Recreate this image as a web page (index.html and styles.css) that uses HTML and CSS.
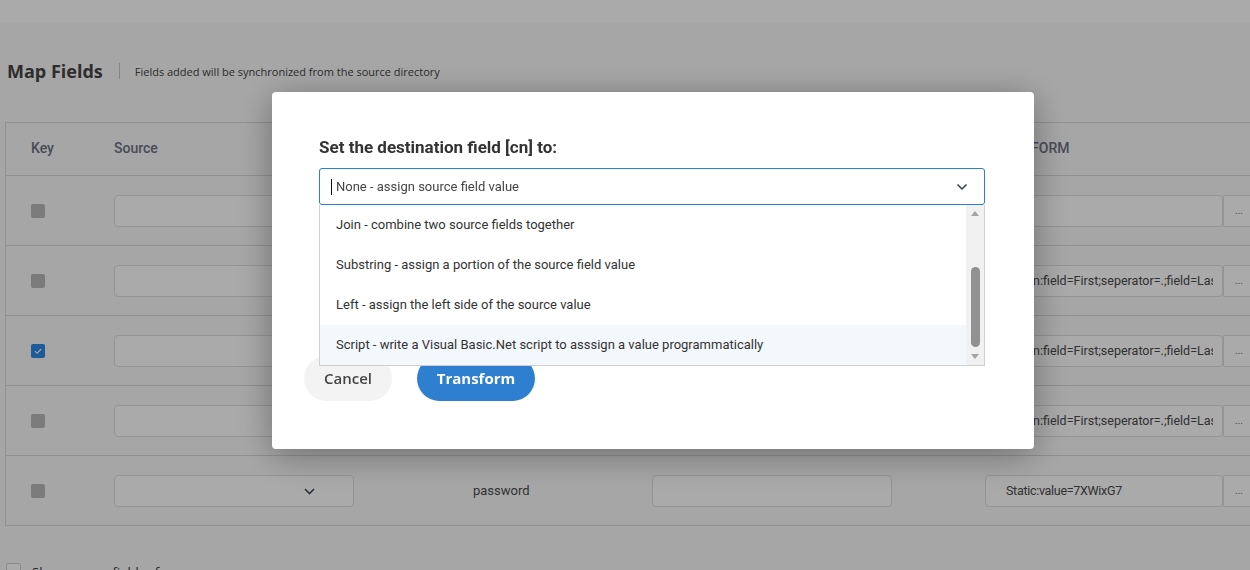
FILE: index.html
```html
<!DOCTYPE html>
<html lang="en">
<head>
<meta charset="utf-8">
<title>Map Fields</title>
<link rel="stylesheet" href="styles.css">
</head>
<body>
<div class="topbar"></div>
<main class="content">
  <div class="map-head">
    <h2 class="map-title">Map Fields</h2>
    <span class="divider"></span>
    <p class="map-sub">Fields added will be synchronized from the source directory</p>
  </div>

  <div class="table">
    <div class="row head">
      <div class="th key">Key</div>
      <div class="th">Source</div>
      <div></div>
      <div></div>
      <div></div>
      <div class="th xhead">TRANSFORM</div>
      <div></div>
    </div>

    <div class="row">
      <div class="key"><span class="cb"></span></div>
      <div class="field select"><svg class="chev" width="11" height="7" viewBox="0 0 11 7"><path d="M1 1l4.5 4.5L10 1" fill="none" stroke="#3d4f5f" stroke-width="1.6"/></svg></div>
      <div class="dest"></div>
      <div class="field"></div>
      <div></div>
      <div class="field xform"></div>
      <div class="more">...</div>
    </div>

    <div class="row">
      <div class="key"><span class="cb"></span></div>
      <div class="field select"><svg class="chev" width="11" height="7" viewBox="0 0 11 7"><path d="M1 1l4.5 4.5L10 1" fill="none" stroke="#3d4f5f" stroke-width="1.6"/></svg></div>
      <div class="dest"></div>
      <div class="field"></div>
      <div></div>
      <div class="field xform join"><span class="xtext">Join:field=First;seperator=.;field=Last</span></div>
      <div class="more">...</div>
    </div>

    <div class="row">
      <div class="key"><span class="cb on"><svg width="14" height="14" viewBox="0 0 14 14"><path d="M4 7.2l2.1 2.1L10.2 5" fill="none" stroke="#fff" stroke-width="1.1"/></svg></span></div>
      <div class="field select"><svg class="chev" width="11" height="7" viewBox="0 0 11 7"><path d="M1 1l4.5 4.5L10 1" fill="none" stroke="#3d4f5f" stroke-width="1.6"/></svg></div>
      <div class="dest"></div>
      <div class="field"></div>
      <div></div>
      <div class="field xform join"><span class="xtext">Join:field=First;seperator=.;field=Last</span></div>
      <div class="more">...</div>
    </div>

    <div class="row">
      <div class="key"><span class="cb"></span></div>
      <div class="field select"><svg class="chev" width="11" height="7" viewBox="0 0 11 7"><path d="M1 1l4.5 4.5L10 1" fill="none" stroke="#3d4f5f" stroke-width="1.6"/></svg></div>
      <div class="dest"></div>
      <div class="field"></div>
      <div></div>
      <div class="field xform join"><span class="xtext">Join:field=First;seperator=.;field=Last</span></div>
      <div class="more">...</div>
    </div>

    <div class="row">
      <div class="key"><span class="cb"></span></div>
      <div class="field select"><svg class="chev" width="11" height="7" viewBox="0 0 11 7"><path d="M1 1l4.5 4.5L10 1" fill="none" stroke="#3d4f5f" stroke-width="1.6"/></svg></div>
      <div class="dest">password</div>
      <div class="field"></div>
      <div></div>
      <div class="field xform static"><span class="xtext">Static:value=7XWixG7</span></div>
      <div class="more">...</div>
    </div>
  </div>

  <label class="show-ref"><span class="box"></span><span>Show source field reference</span></label>
</main>

<div class="overlay"></div>

<div class="modal" role="dialog">
  <h3 class="modal-title">Set the destination field [cn] to:</h3>
  <div class="combo">
    <div class="combo-box">
      <span class="caret"></span>
      <span class="combo-value">None - assign source field value</span>
      <svg width="12" height="8" viewBox="0 0 12 8"><path d="M1.5 1.5l4.5 4.5 4.5-4.5" fill="none" stroke="#2f3e4e" stroke-width="1.5"/></svg>
    </div>
    <div class="dropdown">
      <ul class="options">
        <li class="opt">Join - combine two source fields together</li>
        <li class="opt">Substring - assign a portion of the source field value</li>
        <li class="opt">Left - assign the left side of the source value</li>
        <li class="opt active">Script - write a Visual Basic.Net script to asssign a value programmatically</li>
      </ul>
      <div class="sbar">
        <span class="arrow up"></span>
        <div class="track"><span class="thumb"></span></div>
        <span class="arrow down"></span>
      </div>
    </div>
  </div>
  <div class="actions">
    <button class="btn btn-cancel">Cancel</button>
    <button class="btn btn-primary">Transform</button>
  </div>
</div>
</body>
</html>
```

FILE: styles.css
```css
* { box-sizing: border-box; }

html, body {
  margin: 0;
  height: 100%;
  overflow: hidden;
}

body {
  font-family: Roboto, "Open Sans", Arial, sans-serif;
  background: #fafafa;
  width: 1250px;
  height: 570px;
}

.topbar {
  height: 22px;
  background: #ffffff;
}

.content {
  padding-left: 5px;
}

.map-head {
  display: flex;
  align-items: center;
  height: 24px;
  margin-top: 37px;
}

.map-title {
  margin: 0 0 0 2px;
  font-family: "Open Sans", Arial, sans-serif;
  font-weight: 700;
  font-size: 18px;
  line-height: 24px;
  color: #444;
}

.divider {
  width: 1px;
  height: 16px;
  background: #c8c8c8;
  margin: 0 15px 0 16px;
}

.map-sub {
  margin: 0;
  font-family: "Open Sans", Arial, sans-serif;
  font-size: 11px;
  color: #444;
}

.table {
  margin-top: 39px;
  width: 1270px;
  border-top: 1px solid #d9d9d9;
  border-left: 1px solid #d9d9d9;
}

.row {
  display: grid;
  grid-template-columns: 108px 240px 298px 240px 93px 238px 40px;
  align-items: center;
  height: 70px;
  border-bottom: 1px solid #d9d9d9;
}

.row.head {
  height: 53px;
  padding-bottom: 2px;
}

.th {
  font-weight: 500;
  font-size: 14px;
  color: #6b7385;
}

.xhead {
  padding-left: 1px;
}

.key {
  padding-left: 25px;
}

.cb {
  display: block;
  width: 14px;
  height: 14px;
  border-radius: 2px;
  background: #b9b9b9;
}

.cb.on {
  background: #2b87e6;
}

.cb svg {
  display: block;
}

.field {
  height: 32px;
  border: 1px solid #dedede;
  border-radius: 4px;
  background: #fff;
  display: flex;
  align-items: center;
}

.select {
  justify-content: flex-end;
  padding-right: 38px;
}

.chev {
  margin-top: 2px;
}

.dest {
  padding-left: 119px;
  font-size: 13px;
  color: #4a4a4a;
}

.xform {
  padding: 0 9px 0 20px;
  font-size: 12.5px;
  color: #4a4a4a;
  white-space: nowrap;
}

.xtext {
  flex: 1;
  min-width: 0;
  overflow: hidden;
}

.xform.join {
  padding-left: 30px;
}

.xform.static {
  letter-spacing: -0.3px;
}

.more {
  height: 32px;
  width: 32px;
  border: 1px solid #dedede;
  border-radius: 0 4px 4px 0;
  background: #fff;
  font-size: 10px;
  color: #666;
  display: flex;
  align-items: center;
  justify-content: center;
}

.show-ref {
  display: flex;
  align-items: flex-start;
  gap: 11px;
  margin: 37px 0 0 1px;
  font-family: "Open Sans", Arial, sans-serif;
  font-size: 13px;
  line-height: 18px;
  color: #333;
}

.show-ref .box {
  width: 15px;
  height: 15px;
  border: 1px solid #cfcfcf;
  border-radius: 2px;
  background: #fff;
}

.overlay {
  position: fixed;
  inset: 0;
  background: rgba(0, 0, 0, 0.335);
}

.modal {
  position: fixed;
  left: 272px;
  top: 92px;
  width: 762px;
  height: 357px;
  padding: 45px 49px 48px 47px;
  background: #fff;
  border-radius: 4px;
  box-shadow: 0 6px 36px rgba(0, 0, 0, 0.35);
}

.modal-title {
  margin: 0 0 11px;
  font-size: 17px;
  line-height: 20px;
  font-weight: 700;
  color: #333;
}

.combo {
  position: relative;
}

.combo-box {
  height: 37px;
  border: 1px solid #2a7de1;
  border-radius: 3px;
  display: flex;
  align-items: center;
  padding: 0 16px 0 11px;
  font-size: 13px;
  color: #444;
}

.caret {
  width: 1px;
  height: 16px;
  background: #111;
  margin-right: 4px;
}

.combo-value {
  flex: 1;
}

.dropdown {
  position: absolute;
  top: 100%;
  left: 0;
  right: 0;
  height: 161px;
  border: 1px solid #cfcfcf;
  border-top: none;
  background: #fff;
  display: flex;
  z-index: 2;
}

.options {
  flex: 1;
  list-style: none;
  margin: 0;
  padding: 0;
}

.opt {
  height: 40px;
  display: flex;
  align-items: center;
  padding: 0 0 2px 16px;
  font-size: 13px;
  color: #333;
}

.opt.active {
  background: #f3f8fd;
}

.sbar {
  width: 18px;
  background: #f1f1f1;
  display: flex;
  flex-direction: column;
  align-items: center;
}

.arrow {
  height: 17px;
  display: flex;
  align-items: center;
  justify-content: center;
}

.arrow::before {
  content: "";
  border-left: 4px solid transparent;
  border-right: 4px solid transparent;
}

.arrow.up::before {
  border-bottom: 5px solid #a3a3a3;
}

.arrow.down::before {
  border-top: 5px solid #a3a3a3;
}

.track {
  flex: 1;
  display: flex;
  flex-direction: column;
  align-items: center;
  padding-left: 1px;
}

.thumb {
  width: 9px;
  height: 80px;
  margin-top: 45px;
  border-radius: 5px;
  background: #919191;
}

.actions {
  display: flex;
  gap: 25px;
  margin: 151px 0 0 -15px;
}

.btn {
  height: 45px;
  border: none;
  border-radius: 23px;
  font-family: "Open Sans", Arial, sans-serif;
  font-size: 15px;
  padding: 0 0 2px;
}

.btn-cancel {
  width: 88px;
  background: #f3f3f4;
  color: #454545;
  font-weight: 600;
}

.btn-primary {
  width: 118px;
  background: #2f7fd0;
  color: #fff;
  font-weight: 700;
}
```
